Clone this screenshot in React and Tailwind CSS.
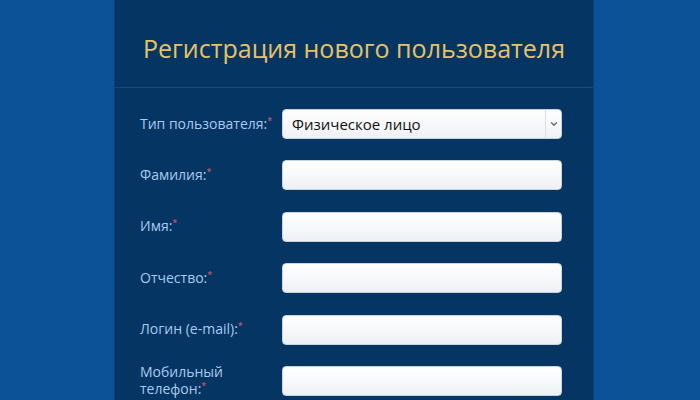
import { ChevronDown } from "lucide-react";

const fields = [
  { label: "Фамилия" },
  { label: "Имя" },
  { label: "Отчество" },
  { label: "Логин (e-mail)" },
  { label: "Мобильный телефон" },
];

function Label({ text }) {
  return (
    <label className="w-[136px] text-[14px] leading-[17px] text-[#a9cbef]">
      {text}:
      <span className="relative -top-[5px] text-[9px] text-[#e0606a]">*</span>
    </label>
  );
}

const inputCls =
  "h-[30px] w-[280px] rounded-[4px] border border-[#c9d3dd] bg-gradient-to-b from-white to-[#eef1f4]";

export default function App() {
  return (
    <div
      className="h-[400px] w-[700px] overflow-hidden bg-[#0b5297] pl-[114px]"
      style={{ fontFamily: '"Open Sans", "Noto Sans", sans-serif' }}
    >
      <div className="h-[400px] w-[480px] border-l border-r border-[#08407a] bg-[#053563]">
        <div className="flex h-[88px] items-start justify-center border-b border-[#154c7e] pt-[30px]">
          <h1 className="text-[25px] leading-[36px] text-[#e8c263]">Регистрация нового пользователя</h1>
        </div>

        <div className="flex flex-col gap-[21.4px] pl-[25px] pt-[21px]">
          <div className="flex h-[30px] items-center gap-[6px]">
            <Label text="Тип пользователя" />
            <div className={inputCls + " flex items-center"}>
              <span className="flex-1 pl-[9px] text-[15px] text-[#111]">Физическое лицо</span>
              <span className="flex h-full w-[16px] items-center justify-center border-l border-[#d9dee3]">
                <ChevronDown size={10} strokeWidth={3} className="text-[#666]" />
              </span>
            </div>
          </div>
          {fields.map((f) => (
            <div key={f.label} className="flex h-[30px] items-center gap-[6px]">
              <Label text={f.label} />
              <div className={inputCls} />
            </div>
          ))}
        </div>
      </div>
    </div>
  );
}
